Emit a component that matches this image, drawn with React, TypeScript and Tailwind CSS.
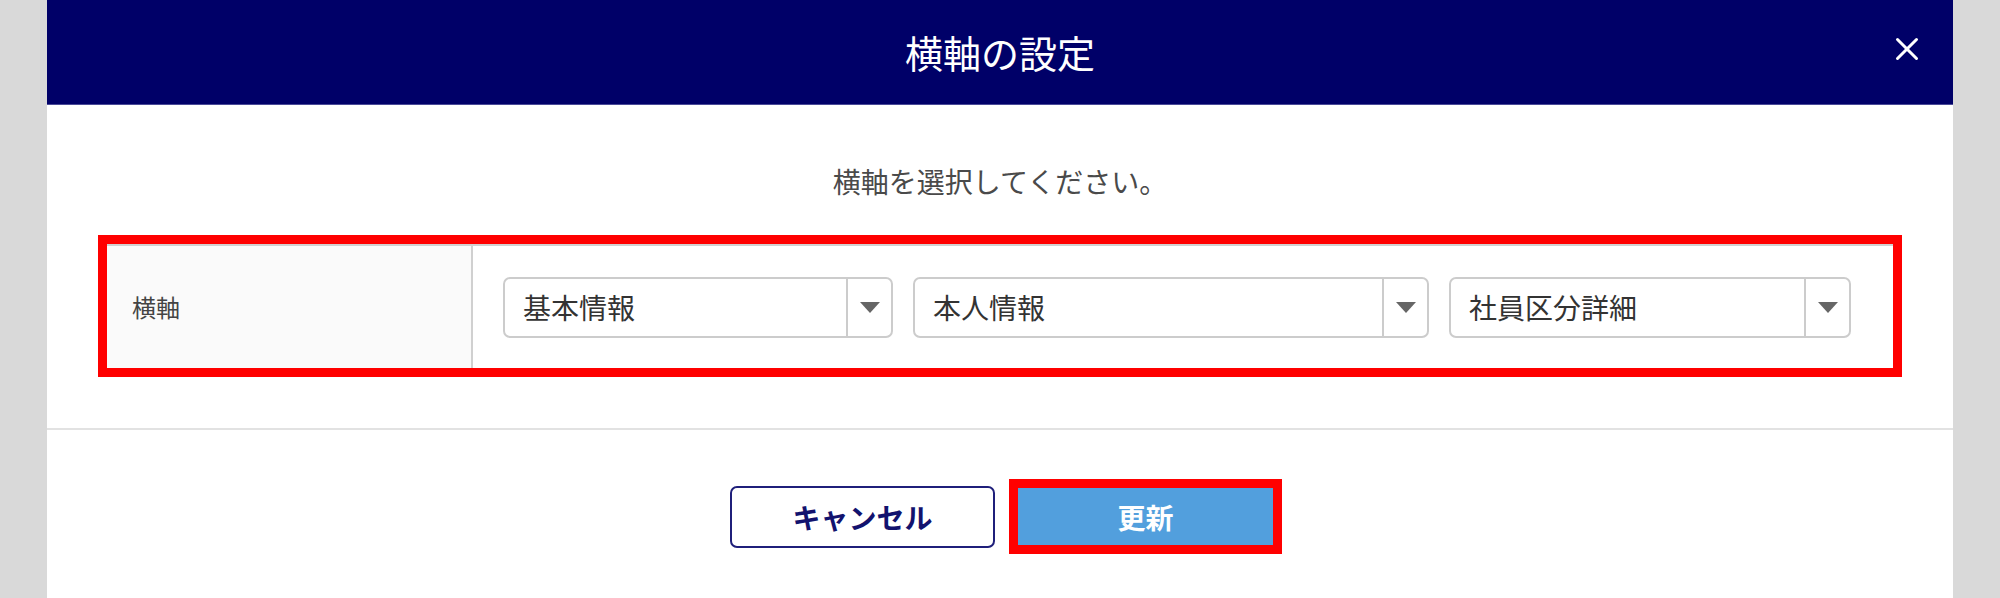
import { X } from "lucide-react";

const jp = "font-['Noto_Sans_CJK_JP','Noto_Sans',sans-serif]";

function Select({ value, width }: { value: string; width: string }) {
  return (
    <div className={`${width} h-[61px] flex items-stretch border-2 border-[#cccccc] rounded-[7px] bg-white`}>
      <div className="flex-1 flex items-center pl-[18px] text-[28px] text-[#333333] leading-none">{value}</div>
      <div className="w-[45px] border-l-2 border-[#cccccc] flex items-center justify-center">
        <svg width="20" height="11" viewBox="0 0 20 11">
          <polygon points="0,0 20,0 10,11" fill="#666666" />
        </svg>
      </div>
    </div>
  );
}

export default function App() {
  return (
    <div className={`w-full h-[598px] bg-[#d9d9d9] flex justify-center overflow-hidden ${jp}`}>
      <div className="w-[1906px] shrink-0 bg-white flex flex-col">
        {/* header */}
        <div className="relative h-[105px] shrink-0 bg-[#000068] border-b border-[#4a4a98] flex items-center justify-center">
          <h1 className="text-[38px] text-white font-normal leading-none">横軸の設定</h1>
          <button className="absolute right-[27px] top-[30px] text-white">
            <X size={38} strokeWidth={1.9} />
          </button>
        </div>

        {/* body */}
        <p className="mt-[56px] text-center text-[28px] leading-[40px] text-[#4a4a4a]">横軸を選択してください。</p>

        <div className="mt-[34px] mx-[51px] border-[9px] border-[#ff0000]">
          <div className="flex h-[124px] border-t-2 border-[#d0d0d0]">
            <div className="w-[366px] shrink-0 bg-[#fafafa] border-r-2 border-[#d0d0d0] flex items-center pl-[25px] text-[24px] text-[#444444]">
              横軸
            </div>
            <div className="flex-1 flex items-center gap-[20px] pl-[30px]">
              <Select value="基本情報" width="w-[390px]" />
              <Select value="本人情報" width="w-[516px]" />
              <Select value="社員区分詳細" width="w-[402px]" />
            </div>
          </div>
        </div>

        <div className="mt-[51px] border-t-2 border-[#e2e2e2]" />

        {/* footer */}
        <div className="mt-[49px] flex items-center justify-center gap-[14px] pl-[12px]">
          <button className="w-[265px] h-[62px] border-2 border-[#1f1f7a] rounded-[7px] bg-white text-[28px] font-bold text-[#12126e]">
            キャンセル
          </button>
          <button className="w-[273px] h-[75px] border-[9px] border-[#ff0000] bg-[#529fdd] text-[28px] font-bold text-white">
            更新
          </button>
        </div>
      </div>
    </div>
  );
}
